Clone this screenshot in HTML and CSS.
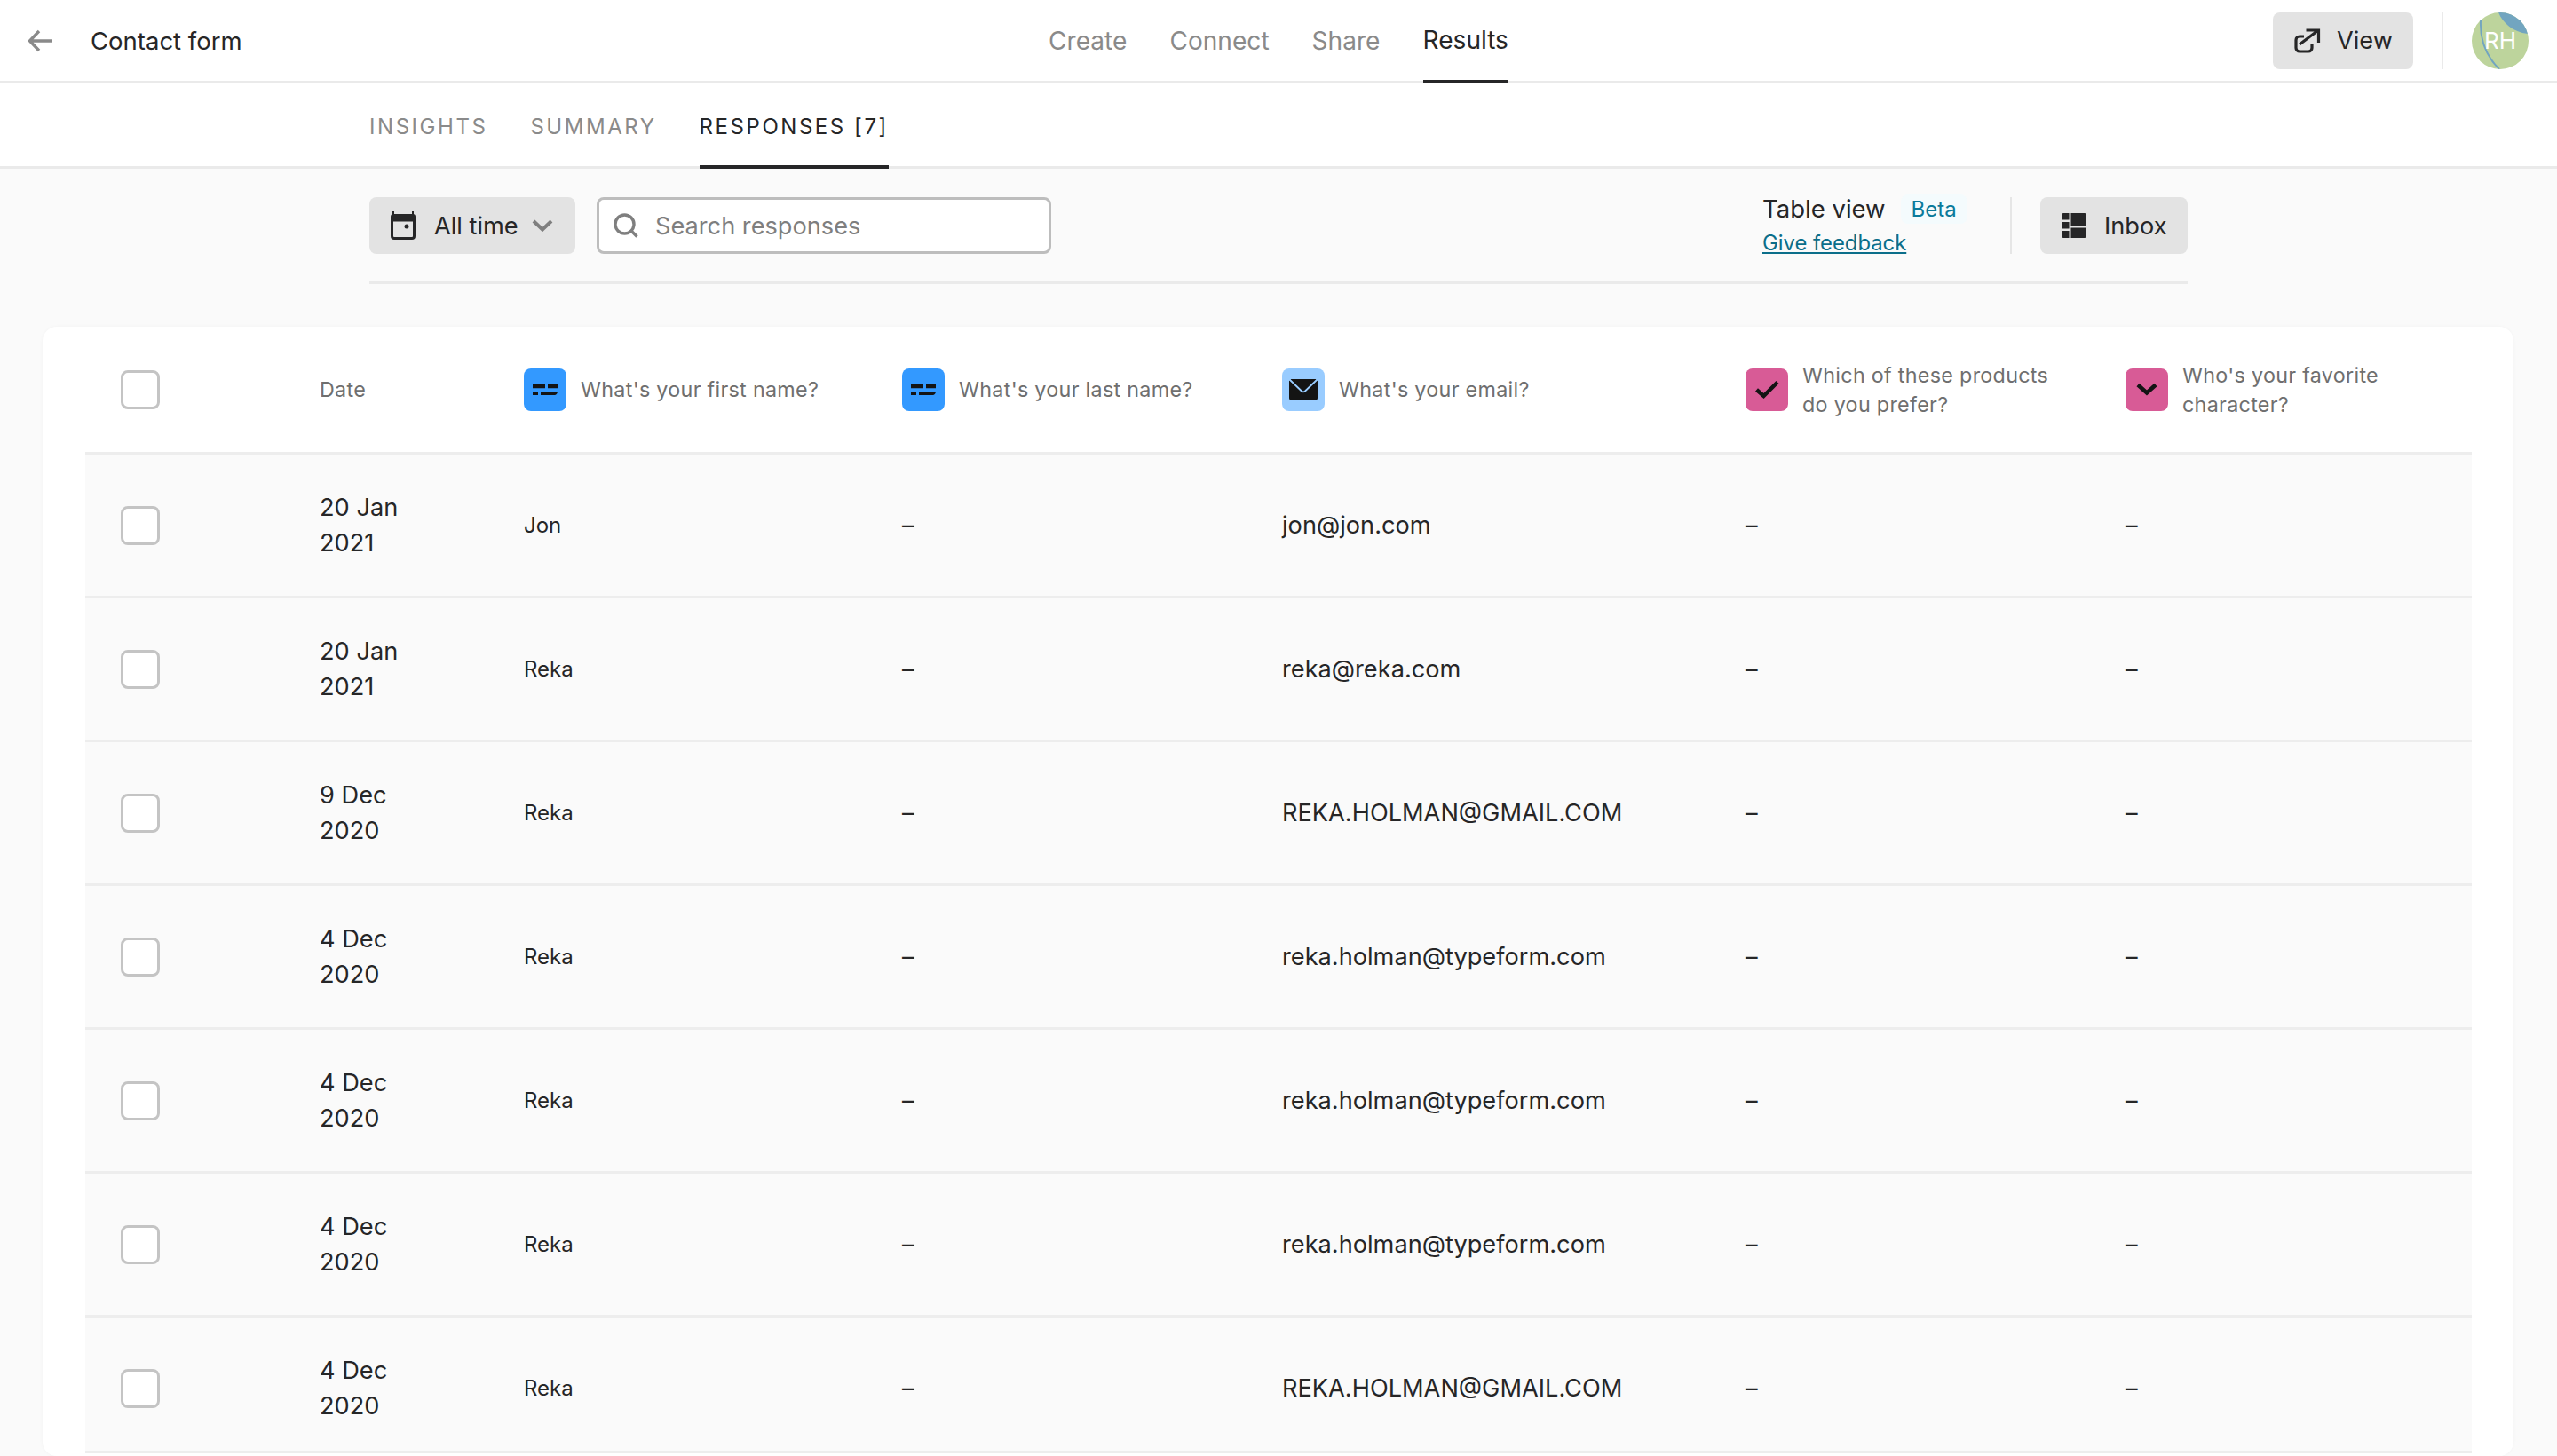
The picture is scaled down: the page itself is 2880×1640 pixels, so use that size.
FILE: index.html
```html
<!DOCTYPE html>
<html lang="en">
<head>
<meta charset="utf-8">
<title>Contact form</title>
<link rel="stylesheet" href="styles.css">
</head>
<body>
<header class="topbar">
  <div class="top-left">
    <svg class="back" viewBox="0 0 32 32"><path d="M29 16H5M14 5 3.500 16 14 27" fill="none" stroke="#8a8a8a" stroke-width="3.400"/></svg>
    <span class="form-name">Contact form</span>
  </div>
  <nav class="top-nav">
    <a class="nav-item">Create</a>
    <a class="nav-item">Connect</a>
    <a class="nav-item">Share</a>
    <a class="nav-item active">Results</a>
  </nav>
  <div class="top-right">
    <button class="btn view-btn">
      <svg class="ic-view" viewBox="0 0 30 28"><path d="M11 9H6a4 4 0 0 0-4 4v9a4 4 0 0 0 4 4h10a4 4 0 0 0 4-4v-5" fill="none" stroke="#262627" stroke-width="3.200"/><path d="M6 18 26.500 2.500M13.500 2h14v14" fill="none" stroke="#262627" stroke-width="3.200"/></svg>
      View
    </button>
    <span class="top-sep"></span>
    <div class="avatar">
      <svg viewBox="0 0 64 64"><path d="M30 0c5 12 16 22 33 24L64 0Z" fill="#72a5c0"/><path d="M10 9c-1 22 7 41 21 55" fill="none" stroke="#72a5c0" stroke-width="2"/></svg>
      <span class="avatar-text">RH</span>
    </div>
  </div>
</header>
<div class="tabs-bar">
  <div class="wrap tabs">
    <a class="tab">INSIGHTS</a>
    <a class="tab">SUMMARY</a>
    <a class="tab active">RESPONSES [7]</a>
  </div>
</div>
<main>
  <div class="wrap toolbar">
    <button class="btn date-btn">
      <svg class="ic-cal" viewBox="0 0 28 32"><path d="M3 0v5M25 0v5" stroke="#262627" stroke-width="2"/><path d="M1.500 10h25v18a2.500 2.500 0 0 1-2.500 2.500H4A2.500 2.500 0 0 1 1.500 28Z" fill="none" stroke="#262627" stroke-width="3"/><path d="M0 11V6a3 3 0 0 1 3-3h22a3 3 0 0 1 3 3v5Z" fill="#262627"/><circle cx="18" cy="17" r="2.500" fill="#262627"/></svg>
      All time
      <svg class="ic-chev" viewBox="0 0 24 14"><path d="M2 2l10 9.500L22 2" fill="none" stroke="#7f7f7f" stroke-width="4"/></svg>
    </button>
    <label class="search">
      <svg class="ic-search" viewBox="0 0 28 28"><circle cx="12.500" cy="12.500" r="10.500" fill="none" stroke="#7f7f7f" stroke-width="3.400"/><path d="M19.500 19.500l7 7" stroke="#7f7f7f" stroke-width="3.400"/></svg>
      <span class="placeholder">Search responses</span>
    </label>
    <div class="view-switch">
      <div class="tv-line"><span class="tv-title">Table view</span><span class="beta">Beta</span></div>
      <a class="feedback">Give feedback</a>
    </div>
    <span class="tool-sep"></span>
    <button class="btn inbox-btn">
      <svg class="ic-inbox" viewBox="0 0 28 28"><path d="M2 0h6.500v7.500H0V2a2 2 0 0 1 2-2ZM0 10h8.500v7.500H0ZM0 20h8.500v8H2a2 2 0 0 1-2-2ZM10.500 0H26a2 2 0 0 1 2 2v12.500H10.500ZM10.500 16.500H28V26a2 2 0 0 1-2 2H10.500Z" fill="#262627"/></svg>
      Inbox
    </button>
  </div>
  <section class="card">
    <div class="row head">
      <div class="cell"><span class="check"></span></div>
      <div class="cell head-text">Date</div>
      <div class="cell q"><span class="q-icon blue"><svg viewBox="0 0 48 48"><path d="M10 18h14v4.300H10ZM27 18h11v4.300H27ZM10 26h6v4h-6ZM19 26h19c0 2-1.500 4-3.500 4H19Z" fill="#141414"/></svg></span><span class="head-text">What's your first name?</span></div>
      <div class="cell q"><span class="q-icon blue"><svg viewBox="0 0 48 48"><path d="M10 18h14v4.300H10ZM27 18h11v4.300H27ZM10 26h6v4h-6ZM19 26h19c0 2-1.500 4-3.500 4H19Z" fill="#141414"/></svg></span><span class="head-text">What's your last name?</span></div>
      <div class="cell q"><span class="q-icon light"><svg viewBox="0 0 48 48"><path d="M10 12h28l2 2v19a3 3 0 0 1-3 3H11a3 3 0 0 1-3-3V14Z" fill="#141414"/><path d="M8.500 12.500 22 25.500a3 3 0 0 0 4 0L39.500 12.500" fill="none" stroke="#99ccff" stroke-width="1.800"/></svg></span><span class="head-text">What's your email?</span></div>
      <div class="cell q"><span class="q-icon pink"><svg viewBox="0 0 48 48"><path d="M12.500 24l8 7L36 15.500" fill="none" stroke="#141414" stroke-width="4.500"/></svg></span><span class="head-text">Which of these products<br>do you prefer?</span></div>
      <div class="cell q"><span class="q-icon pink"><svg viewBox="0 0 48 48"><path d="M14 18.500l10 9 10-9" fill="none" stroke="#141414" stroke-width="4.500"/></svg></span><span class="head-text">Who's your favorite<br>character?</span></div>
    </div>
    <div class="row"><div class="cell"><span class="check"></span></div><div class="cell date">20 Jan<br>2021</div><div class="cell name">Jon</div><div class="cell val">–</div><div class="cell val">jon@jon.com</div><div class="cell val">–</div><div class="cell val">–</div></div>
    <div class="row"><div class="cell"><span class="check"></span></div><div class="cell date">20 Jan<br>2021</div><div class="cell name">Reka</div><div class="cell val">–</div><div class="cell val">reka@reka.com</div><div class="cell val">–</div><div class="cell val">–</div></div>
    <div class="row"><div class="cell"><span class="check"></span></div><div class="cell date">9 Dec<br>2020</div><div class="cell name">Reka</div><div class="cell val">–</div><div class="cell val">REKA.HOLMAN@GMAIL.COM</div><div class="cell val">–</div><div class="cell val">–</div></div>
    <div class="row"><div class="cell"><span class="check"></span></div><div class="cell date">4 Dec<br>2020</div><div class="cell name">Reka</div><div class="cell val">–</div><div class="cell val">reka.holman@typeform.com</div><div class="cell val">–</div><div class="cell val">–</div></div>
    <div class="row"><div class="cell"><span class="check"></span></div><div class="cell date">4 Dec<br>2020</div><div class="cell name">Reka</div><div class="cell val">–</div><div class="cell val">reka.holman@typeform.com</div><div class="cell val">–</div><div class="cell val">–</div></div>
    <div class="row"><div class="cell"><span class="check"></span></div><div class="cell date">4 Dec<br>2020</div><div class="cell name">Reka</div><div class="cell val">–</div><div class="cell val">reka.holman@typeform.com</div><div class="cell val">–</div><div class="cell val">–</div></div>
    <div class="row last"><div class="cell"><span class="check"></span></div><div class="cell date">4 Dec<br>2020</div><div class="cell name">Reka</div><div class="cell val">–</div><div class="cell val">REKA.HOLMAN@GMAIL.COM</div><div class="cell val">–</div><div class="cell val">–</div></div>
  </section>
</main>
</body>
</html>
```

FILE: styles.css
```css
* { box-sizing: border-box; }
html, body { margin: 0; height: 1640px; overflow: hidden; }
body { background: #fafafa; color: #262627; font-family: Inter, "Liberation Sans", sans-serif; font-size: 27.2px; }
a { color: inherit; }
svg { display: block; flex: none; }

.topbar { height: 94px; background: #fff; border-bottom: 3px solid #eaeaea; display: grid; grid-template-columns: 1fr auto 1fr; align-items: center; }
.top-left { display: flex; align-items: center; padding-left: 30px; }
.back { width: 32px; height: 32px; }
.form-name { margin-left: 40px; font-size: 27.5px; }
.top-nav { display: flex; gap: 48px; align-self: stretch; margin-bottom: -3px; font-size: 28.1px; }
.nav-item { display: flex; align-items: center; color: #8a8a8a; padding-bottom: 3px; }
.nav-item.active { color: #262627; border-bottom: 4px solid #262627; padding-bottom: 0; }
.top-right { display: flex; align-items: center; justify-content: flex-end; padding-right: 32px; }
.btn { font: inherit; color: #262627; background: #e3e3e3; border: 0; border-radius: 8px; height: 64px; display: flex; align-items: center; }
.view-btn { width: 158px; padding-left: 24px; gap: 18px; }
.ic-view { width: 30px; height: 28px; }
.top-sep { width: 2px; height: 64px; background: #eaeaea; margin: 0 32px; }
.avatar { width: 64px; height: 64px; border-radius: 50%; background: #bdd49c; position: relative; overflow: hidden; display: flex; align-items: center; justify-content: center; }
.avatar svg { position: absolute; inset: 0; width: 64px; height: 64px; }
.avatar-text { position: relative; color: #fff; font-size: 26px; }

.tabs-bar { height: 96px; background: #fff; border-bottom: 3px solid #eaeaea; }
.wrap { width: 2048px; margin: 0 auto; }
.tabs { display: flex; gap: 48px; height: 96px; }
.tab { display: flex; align-items: center; color: #8a8a8a; font-size: 24px; letter-spacing: 2.55px; padding-top: 1px; }
.tab.active { color: #262627; border-bottom: 4px solid #262627; padding-top: 5px; }

.toolbar { display: flex; align-items: flex-start; height: 130px; padding-top: 32px; border-bottom: 3px solid #eaeaea; }
.date-btn { width: 232px; padding-left: 24px; }
.ic-cal { width: 28px; height: 32px; margin-right: 21px; }
.ic-chev { width: 24px; height: 14px; margin-left: 15px; }
.search { width: 512px; height: 64px; margin-left: 24px; background: #fff; border: 3px solid #bdbdbd; border-radius: 8px; display: flex; align-items: center; padding-left: 16px; }
.ic-search { width: 28px; height: 28px; margin-right: 19px; }
.placeholder { color: #7f7f7f; }
.view-switch { margin-left: auto; width: 279px; height: 64px; }
.tv-line { display: flex; align-items: center; height: 30px; margin-top: -2px; font-size: 27.5px; }
.beta { color: #0b7a9b; font-size: 24px; margin-left: 17px; padding: 2px 12px; background: #f4fbfd; border-radius: 8px; }
.feedback { display: block; font-size: 23.8px; color: #0b6e8a; text-decoration: underline; margin-top: 9px; line-height: 30px; }
.tool-sep { width: 2px; height: 64px; background: #e6e6e6; }
.inbox-btn { width: 166px; margin-left: 32px; padding-left: 24px; gap: 20px; }
.ic-inbox { width: 28px; height: 28px; }

.card { margin: 48px 49px 0 48px; height: 1272px; background: #fff; border-radius: 16px; padding: 0 47px 0 48px; overflow: hidden; box-shadow: 0 0 4px rgba(0,0,0,.03); }
.row { display: grid; grid-template-columns: 264px 230px 426px 428px 522px 428px 390px; height: 162px; background: #fafafa; border-bottom: 3px solid #ededed; align-items: center; }
.row.head { height: 144px; background: #fff; }
.row.last { height: 153px; padding-top: 9px; }
.cell { display: flex; align-items: center; min-width: 0; }
.cell:first-child { padding-left: 40px; }
.check { width: 44px; height: 44px; background: #fff; border: 3px solid #c4c4c4; border-radius: 8px; }
.head-text { color: #6f6f6f; font-size: 23.3px; line-height: 33px; letter-spacing: .3px; }
.q { gap: 16px; }
.q-icon { width: 48px; height: 48px; border-radius: 8px; flex: none; }
.q-icon svg { width: 48px; height: 48px; }
.blue { background: #3399ff; }
.light { background: #99ccff; }
.pink { background: #d85b96; }
.date { line-height: 40px; }
.name { font-size: 24px; }
```
